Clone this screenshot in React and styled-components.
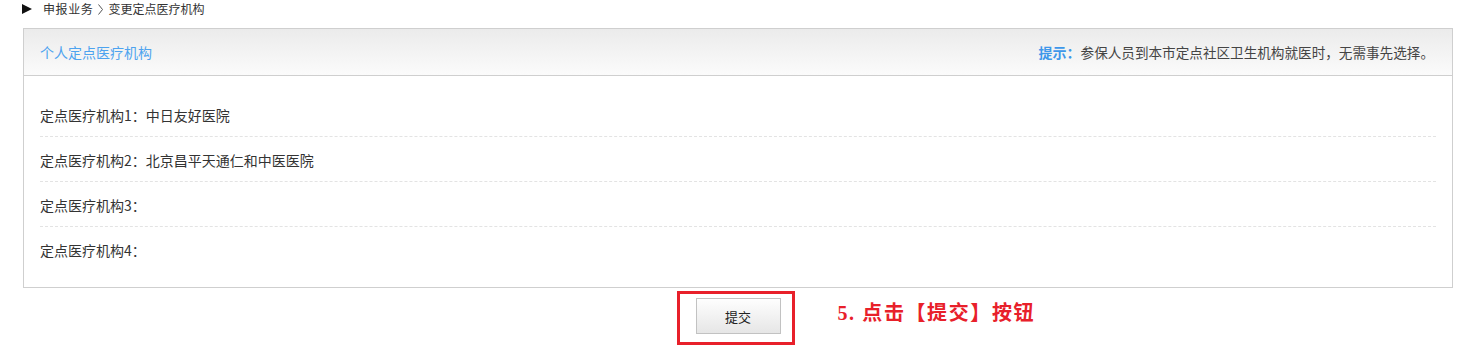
import React from 'react'
import styled, { createGlobalStyle } from 'styled-components'

const GlobalStyle = createGlobalStyle`
  html, body {
    margin: 0;
    padding: 0;
    background: #fff;
    font-family: "Noto Sans CJK SC", "Liberation Sans", sans-serif;
    color: #333;
  }
`

const rows = [
  { label: '定点医疗机构1：', value: '中日友好医院' },
  { label: '定点医疗机构2：', value: '北京昌平天通仁和中医医院' },
  { label: '定点医疗机构3：', value: '' },
  { label: '定点医疗机构4：', value: '' },
]

export default function App() {
  return (
    <Page>
      <GlobalStyle />
      <Crumbs>
        <Arrow />
        <Wide>申报业务</Wide>
        <Sep viewBox="0 0 5 11" width="5" height="11">
          <polyline points="0.5,0.5 4.5,5.5 0.5,10.5" fill="none" stroke="#555" strokeWidth="1" />
        </Sep>
        <span>变更定点医疗机构</span>
      </Crumbs>
      <Panel>
        <Header>
          <Title>个人定点医疗机构</Title>
          <Hint>
            <b>提示：</b>参保人员到本市定点社区卫生机构就医时，无需事先选择。
          </Hint>
        </Header>
        <Body>
          {rows.map((r, i) => (
            <Row key={i} last={i === rows.length - 1}>
              {r.label}{r.value}
            </Row>
          ))}
        </Body>
      </Panel>
      <Actions>
        <Marked>
          <Submit>提交</Submit>
          <Note>5. 点击【提交】按钮</Note>
        </Marked>
      </Actions>
    </Page>
  )
}

const Page = styled.div`
  width: 1468px;
  height: 353px;
  padding: 0 15px 0 23px;
  box-sizing: border-box;
  overflow: hidden;
`
const Crumbs = styled.div`
  display: flex;
  align-items: center;
  height: 17px;
  margin-left: -1px;
  font-size: 12px;
  line-height: 17px;
  color: #333;
  span { display: block; }
`
const Arrow = styled.i`
  width: 0;
  height: 0;
  border-left: 10px solid #111;
  border-top: 5px solid transparent;
  border-bottom: 5px solid transparent;
  margin-right: 11px;
`
const Wide = styled.span`
  letter-spacing: 0.6px;
`
const Sep = styled.svg`
  display: block;
  margin: 1px 5px 0 5px;
`
const Panel = styled.div`
  margin-top: 11px;
  border: 1px solid #cfcfcf;
  width: 1430px;
  box-sizing: border-box;
`
const Header = styled.div`
  display: flex;
  align-items: center;
  justify-content: space-between;
  height: 46px;
  padding: 0 18px 0 16px;
  background: linear-gradient(to bottom, #ebebeb, #fbfbfb);
  border-bottom: 1px solid #cfcfcf;
  font-size: 14px;
`
const Title = styled.div`
  color: #4da3ef;
`
const Hint = styled.div`
  font-size: 13.6px;
  color: #444;
  b { color: #3e97ea; font-size: 14px; }
`
const Body = styled.div`
  padding: 16px 16px 15px;
`
const Row = styled.div`
  height: 45px;
  display: flex;
  align-items: center;
  padding-top: 1px;
  box-sizing: border-box;
  font-size: 14px;
  color: #333;
  border-bottom: ${p => (p.last ? 'none' : '1px dashed #e3e3e3')};
`
const Actions = styled.div`
  display: flex;
  justify-content: center;
  width: 1430px;
  padding-top: 10px;
`
const Marked = styled.div`
  position: relative;
  &::before {
    content: '';
    position: absolute;
    left: -19px;
    top: -7px;
    width: 112px;
    height: 48px;
    border: 3px solid #e8202a;
  }
`
const Submit = styled.button`
  display: block;
  width: 85px;
  height: 36px;
  border: 1px solid #c2c2c2;
  background: linear-gradient(to bottom, #fefefe, #e6e6e6);
  font-family: "Noto Sans CJK SC", sans-serif;
  font-size: 13px;
  color: #222;
  cursor: pointer;
`
const Note = styled.div`
  position: absolute;
  left: 142px;
  top: -1px;
  white-space: nowrap;
  font-family: "Liberation Serif", "Noto Sans CJK SC", serif;
  font-weight: bold;
  font-size: 20px;
  letter-spacing: 1.6px;
  color: #e8202a;
`
